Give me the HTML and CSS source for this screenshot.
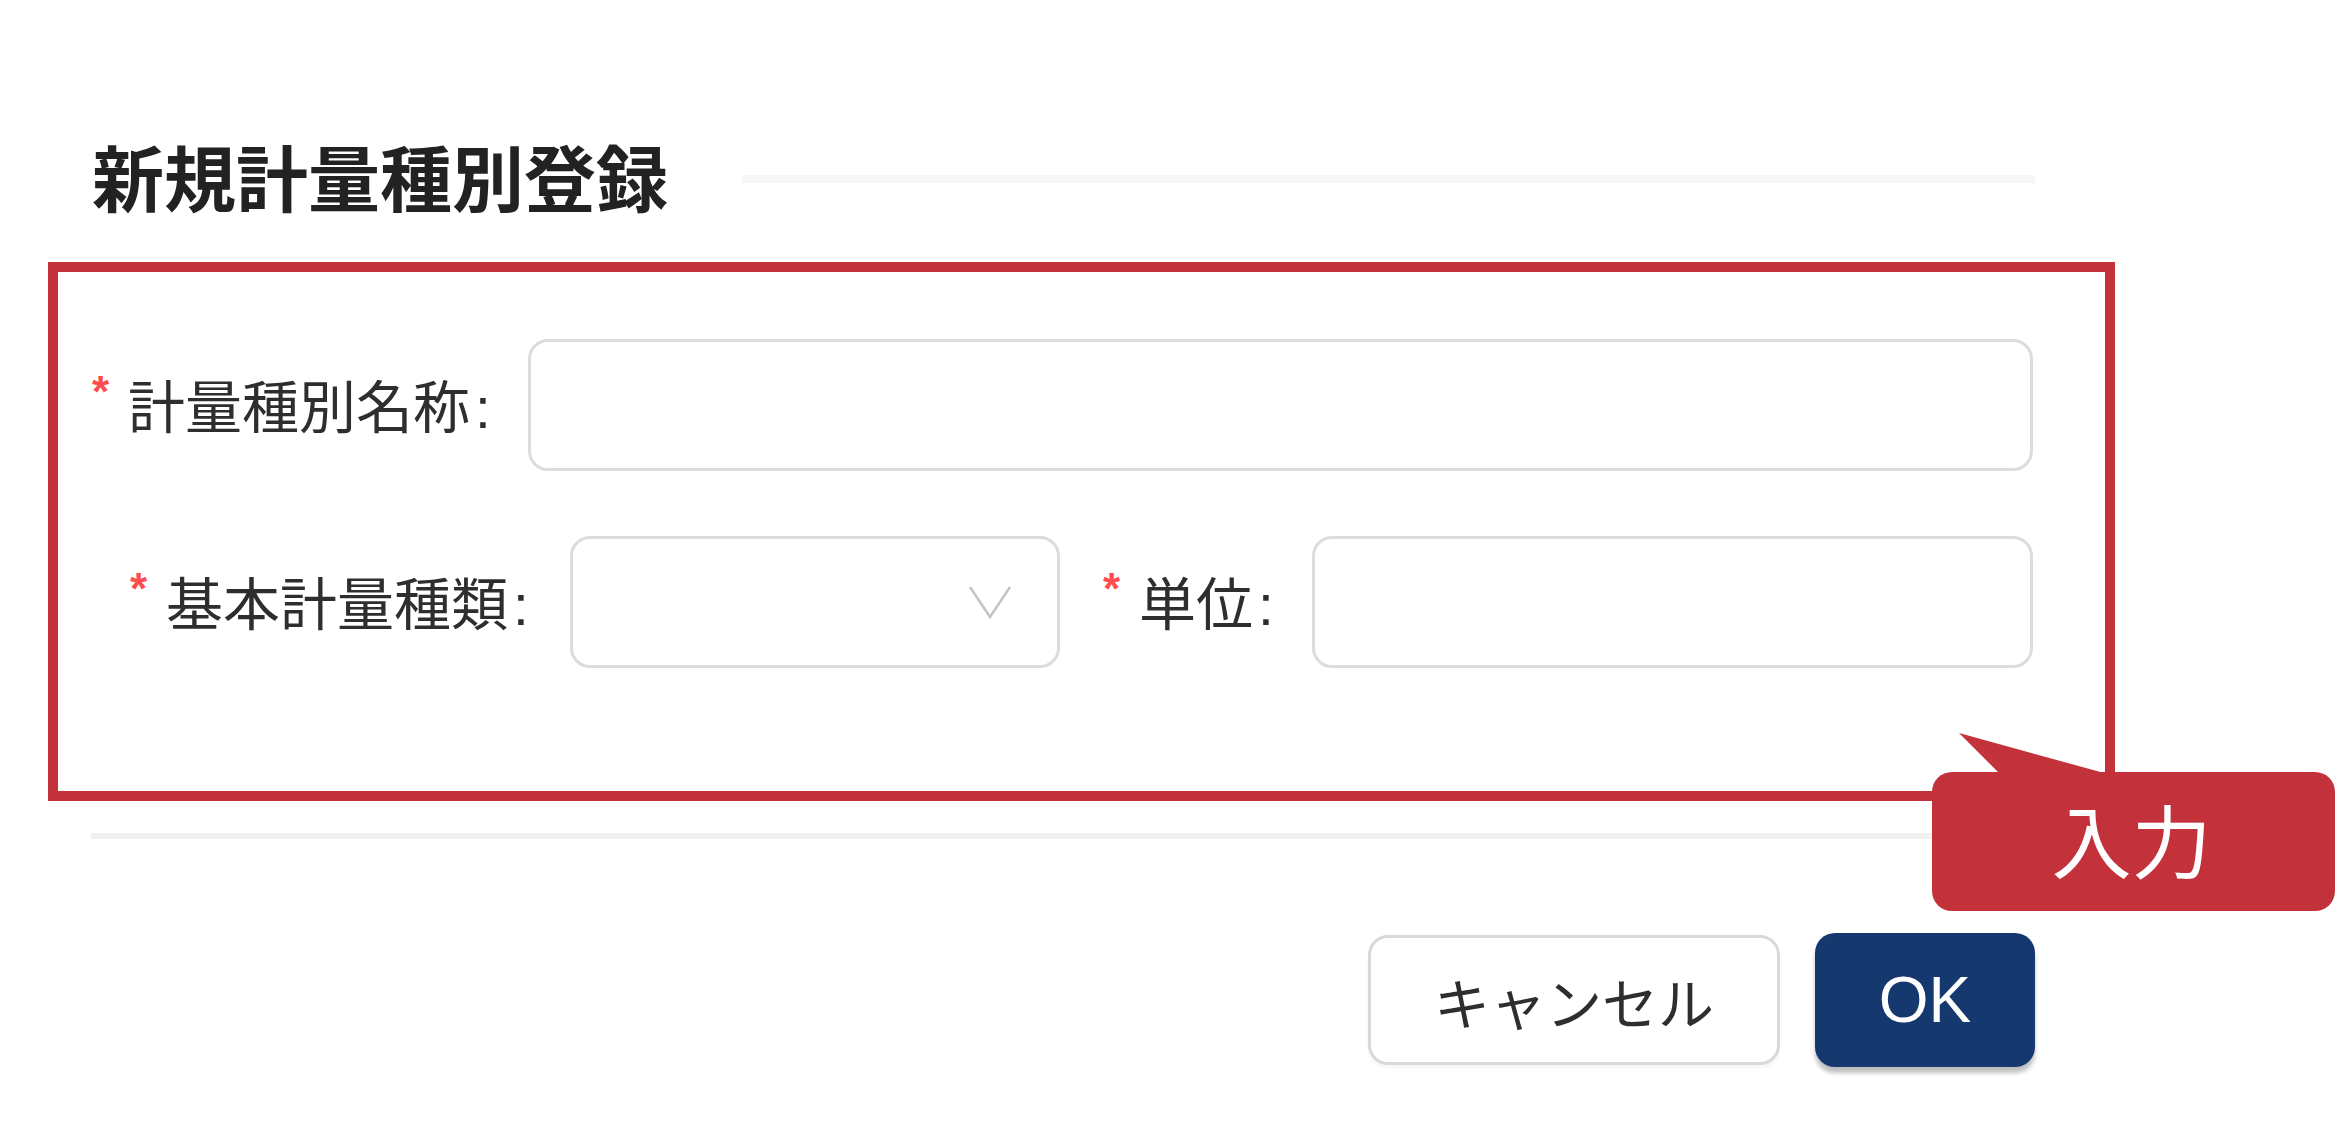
FILE: index.html
```html
<!DOCTYPE html>
<html lang="ja">
<head>
<meta charset="utf-8">
<title>新規計量種別登録</title>
<link rel="stylesheet" href="styles.css">
</head>
<body>
<div class="page">
  <div class="title-row">
    <h1 class="title">新規計量種別登録</h1>
    <div class="title-rule"></div>
  </div>

  <div class="frame">
    <div class="form-row row-1">
      <label class="label label-name"><span class="req">*</span><span class="label-text">計量種別名称</span><span class="colon">:</span></label>
      <input class="field field-wide" type="text">
    </div>
    <div class="form-row row-2">
      <label class="label label-base"><span class="req">*</span><span class="label-text">基本計量種類</span><span class="colon">:</span></label>
      <div class="field select">
        <svg class="chevron" width="44" height="34" viewBox="0 0 44 34"><polyline points="2,2 22,32 42,2" fill="none" stroke="#c4c4c4" stroke-width="2.5"/></svg>
      </div>
      <label class="label label-unit"><span class="req">*</span><span class="label-text">単位</span><span class="colon">:</span></label>
      <input class="field field-wide" type="text">
    </div>
  </div>

  <div class="footer">
    <div class="divider"></div>
    <div class="actions">
      <button class="btn btn-cancel" type="button">キャンセル</button>
      <button class="btn btn-ok" type="button">OK</button>
    </div>
  </div>

  <div class="callout">
    <svg class="callout-tail" width="145" height="40" viewBox="0 0 145 40"><polygon points="0,0 40,40 145,40" fill="#c3323a"/></svg>
    <span class="callout-text">入力</span>
  </div>
</div>
</body>
</html>
```

FILE: styles.css
```css
html, body {
  margin: 0;
  padding: 0;
  background: #ffffff;
}

body {
  font-family: "Liberation Sans", "Noto Sans CJK JP", sans-serif;
  color: #2b2b2b;
}

.page {
  position: relative;
  width: 2337px;
  height: 1127px;
  box-sizing: border-box;
  padding: 132px 0 0 48px;
  overflow: hidden;
}

.title-row {
  display: flex;
  align-items: center;
  height: 86px;
  margin-left: 44px;
  width: 1943px;
}

.title {
  margin: 0;
  font-family: "Noto Sans CJK JP", sans-serif;
  font-size: 72px;
  line-height: 86px;
  font-weight: 700;
  color: #222222;
  white-space: nowrap;
}

.title-rule {
  flex: 1;
  height: 8px;
  margin-left: 74px;
  margin-top: 8px;
  background: #f6f6f6;
}

.frame {
  margin-top: 44px;
  width: 2067px;
  box-sizing: border-box;
  border: 10px solid #c3323a;
  padding: 67px 72px 123px 0;
}

.form-row {
  display: flex;
  align-items: center;
  height: 132px;
}

.form-row + .form-row {
  margin-top: 65px;
}

.row-1 {
  padding-left: 34px;
}

.row-2 {
  padding-left: 72px;
}

.label {
  display: flex;
  align-items: baseline;
  box-sizing: border-box;
  white-space: nowrap;
  font-size: 57px;
  line-height: 70px;
  color: #2e2e2e;
  flex: none;
}

.label-name {
  width: 436px;
}

.label-base {
  width: 440px;
}

.label-unit {
  width: 209px;
  margin-left: 43px;
}

.req {
  font-family: "Liberation Sans", sans-serif;
  font-size: 44px;
  font-weight: 700;
  line-height: 44px;
  align-self: flex-start;
  margin-top: 2px;
  color: #ff4d4f;
  width: 36px;
  flex: none;
}

.label-text {
  font-family: "Noto Sans CJK JP", sans-serif;
}

.colon {
  margin-left: 5px;
}

.field {
  box-sizing: border-box;
  height: 132px;
  border: 3px solid #dcdcdc;
  border-radius: 20px;
  background: #ffffff;
  outline: none;
  padding: 0 30px;
  font-size: 57px;
}

.field-wide {
  flex: 1;
  min-width: 0;
}

.select {
  width: 490px;
  flex: none;
  display: flex;
  align-items: center;
  justify-content: flex-end;
  padding-right: 45px;
}

.chevron {
  display: block;
}

.footer {
  margin-left: 43px;
  width: 1944px;
  margin-top: 32px;
}

.divider {
  height: 6px;
  background: #f1f1f1;
}

.actions {
  display: flex;
  justify-content: flex-end;
  align-items: center;
  gap: 35px;
  margin-top: 94px;
}

.btn {
  box-sizing: border-box;
  font-family: "Liberation Sans", "Noto Sans CJK JP", sans-serif;
  border-radius: 20px;
  cursor: pointer;
  padding: 0;
}

.btn-cancel {
  width: 412px;
  height: 130px;
  border: 3px solid #d9d9d9;
  background: #ffffff;
  color: #2e2e2e;
  font-size: 56px;
  box-shadow: 0 3px 3px rgba(0, 0, 0, 0.04);
}

.btn-ok {
  width: 220px;
  height: 134px;
  border: none;
  background: #15386e;
  color: #ffffff;
  font-size: 64px;
  box-shadow: 0 6px 4px rgba(0, 0, 0, 0.25);
}

.callout {
  position: absolute;
  left: 1932px;
  top: 772px;
  width: 403px;
  height: 139px;
  border-radius: 20px;
  background: #c3323a;
  display: flex;
  align-items: center;
  justify-content: center;
}

.callout-tail {
  position: absolute;
  left: 27px;
  top: -39px;
  display: block;
}

.callout-text {
  font-family: "Noto Sans CJK JP", sans-serif;
  font-size: 80px;
  line-height: 1;
  font-weight: 400;
  color: #ffffff;
  margin-left: -4px;
  margin-top: -10px;
}
```
